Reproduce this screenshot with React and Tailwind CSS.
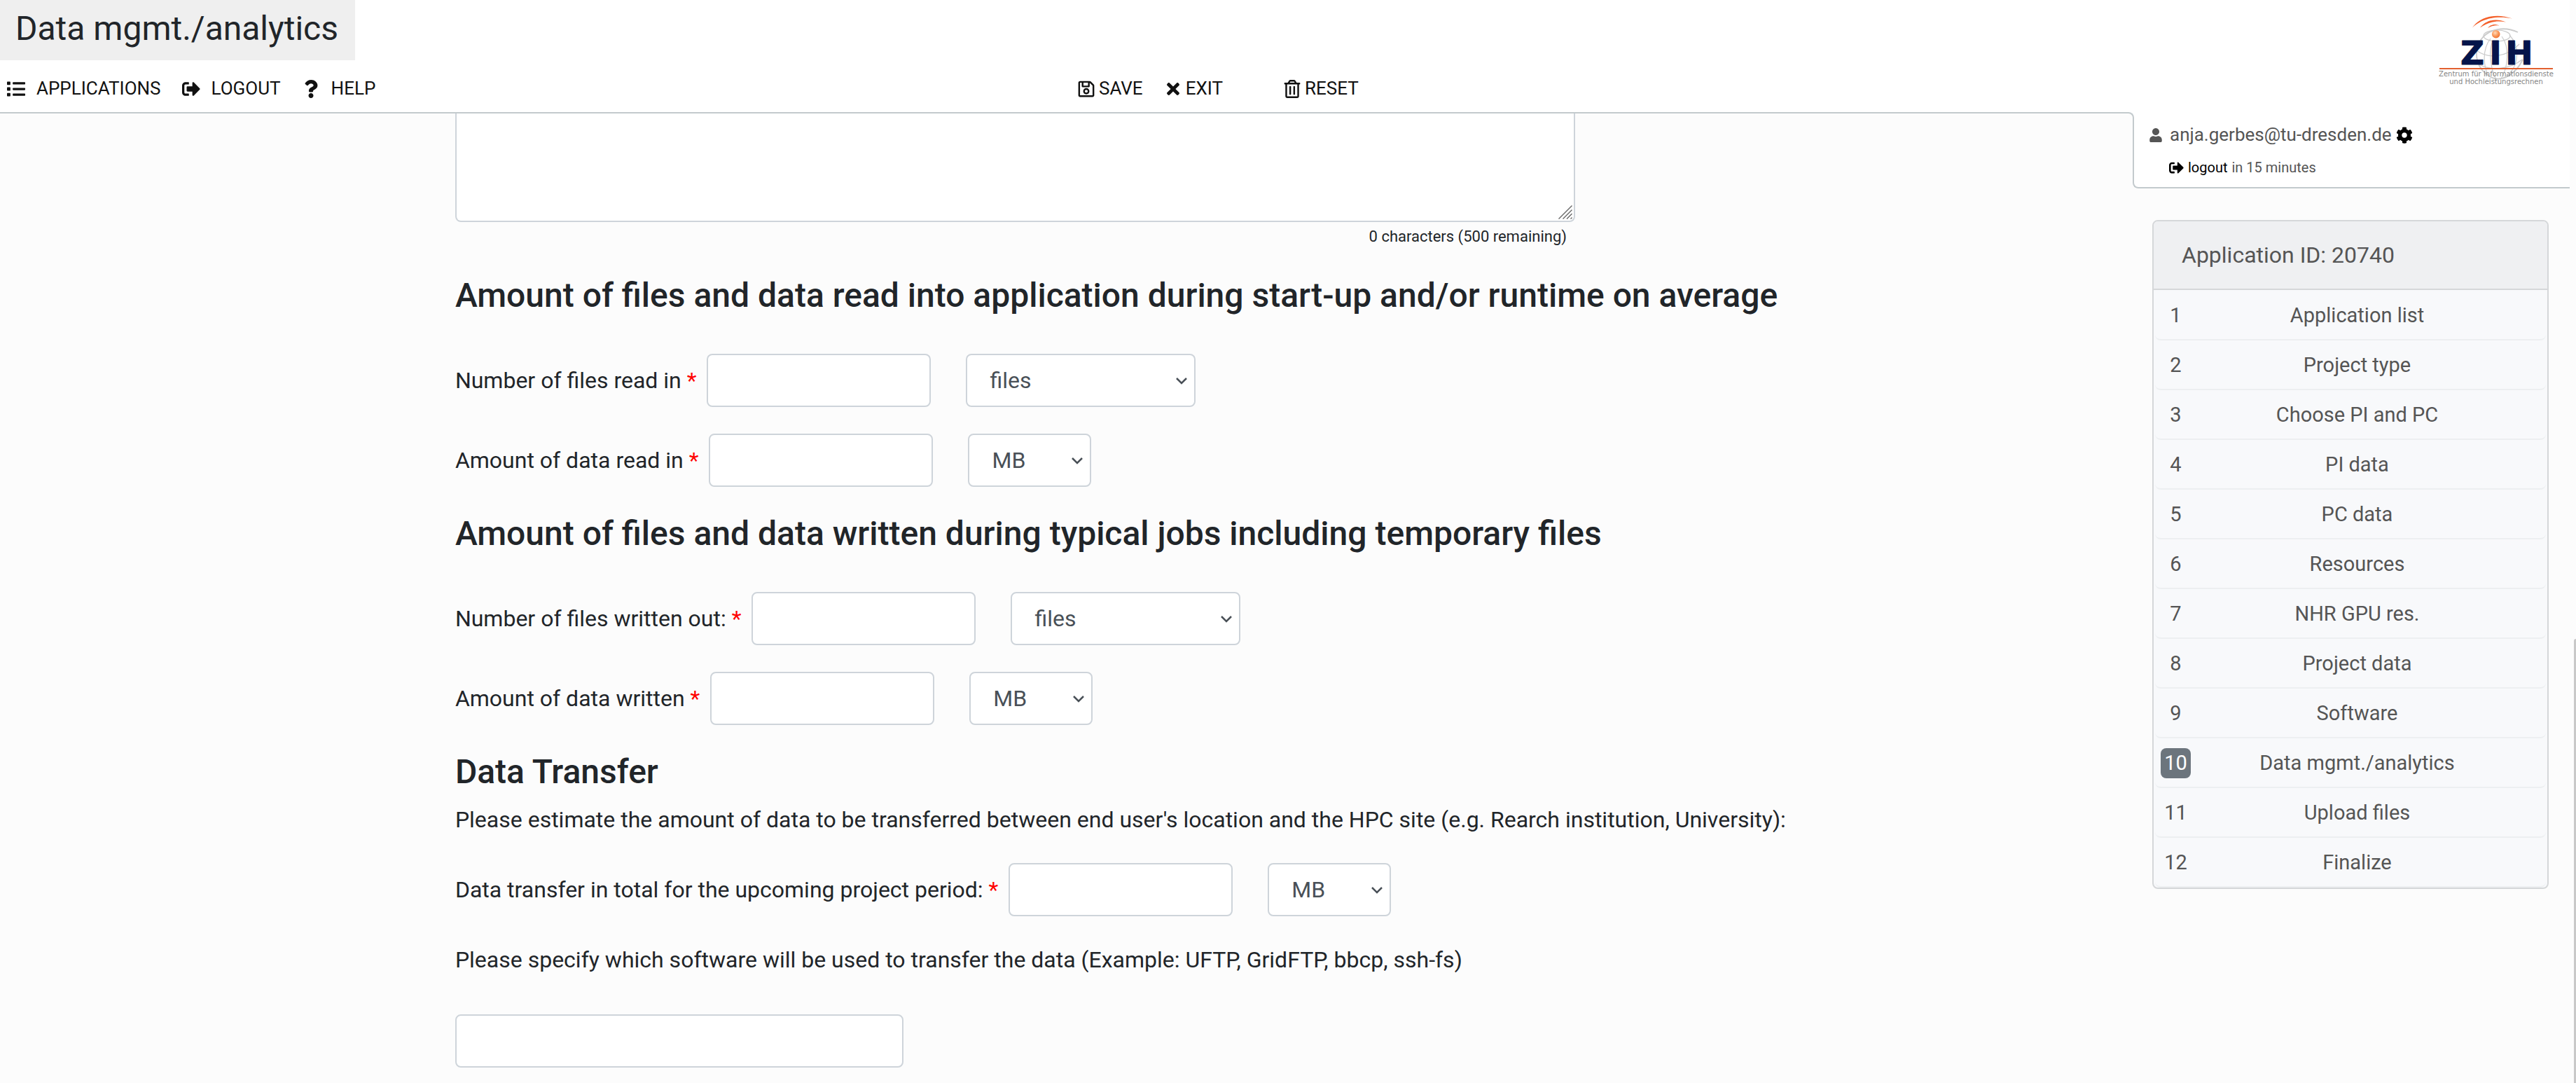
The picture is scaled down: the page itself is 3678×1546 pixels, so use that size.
import {
  FaList,
  FaSignOutAlt,
  FaQuestion,
  FaRegSave,
  FaTimes,
  FaRegTrashAlt,
  FaUser,
  FaCog,
} from "react-icons/fa";

const STEPS = [
  "Application list",
  "Project type",
  "Choose PI and PC",
  "PI data",
  "PC data",
  "Resources",
  "NHR GPU res.",
  "Project data",
  "Software",
  "Data mgmt./analytics",
  "Upload files",
  "Finalize",
];
const CURRENT_STEP = 10;

function Logo() {
  return (
    <svg
      viewBox="0 0 170 130"
      className="mr-[19px] h-[130px] w-[170px] shrink-0"
      role="img"
      aria-label="ZIH"
    >
      <defs>
        <radialGradient id="ball" cx="0.4" cy="0.35" r="0.7">
          <stop offset="0" stopColor="#ffd9b8" />
          <stop offset="0.5" stopColor="#fb9f63" />
          <stop offset="1" stopColor="#ee6a26" />
        </radialGradient>
      </defs>
      <g fill="none" stroke="#cbcbcb" strokeWidth="1.2">
        <path d="M115 46 C96 37 73 41 62 57 C51 75 55 98 76 110 C92 118 112 106 122 85" strokeWidth="1.8" />
        <ellipse cx="85" cy="51" rx="19" ry="8" />
        <path d="M76 55 C64 70 65 95 74 110" />
        <path d="M79 58 C73 74 76 98 84 114" />
        <path d="M92 52 C103 66 102 96 90 114" />
        <path d="M103 50 C118 66 116 90 104 104" />
        <path d="M56 72 C72 84 98 83 117 63" />
        <path d="M58 91 C76 102 104 99 121 85" />
      </g>
      <g fill="#f4602a">
        <path d="M50 39.5 C60 24 84 18 107 26.5 C84 22 64 26.5 50 39.5Z" />
        <path d="M61 39.5 C69 28.5 84 25.5 98 31.5 C84 29 72 31.5 61 39.5Z" />
        <path d="M72 40 C76 35 82 33.5 88.5 36.5 C82 35.8 77 37 72 40Z" />
      </g>
      <g
        fill="#04144a"
        stroke="#04144a"
        strokeWidth="1"
        strokeLinejoin="round"
        fontFamily="DejaVu Sans"
        fontWeight="700"
        fontSize="47"
        textAnchor="middle"
      >
        <text x="50" y="92">Z</text>
        <text x="83" y="92">I</text>
        <text x="117" y="92">H</text>
      </g>
      <circle cx="83.7" cy="48.7" r="5.8" fill="url(#ball)" />
      <rect x="3" y="97" width="162" height="2" fill="#e2602f" />
      <g fill="#858585" fontFamily="DejaVu Sans" fontSize="10" textAnchor="middle">
        <text x="84" y="109">Zentrum für Informationsdienste</text>
        <text x="84" y="120">und Hochleistungsrechnen</text>
      </g>
    </svg>
  );
}

function Header() {
  const link = "flex items-center gap-4";
  const action = "flex cursor-pointer items-center gap-[5px]";
  return (
    <header className="flex h-40 bg-white">
      <div className="flex-1">
        <h1 className="w-fit bg-[#efefef] pt-3 pr-6 pb-4 pl-[22px] text-[48px] leading-[58px]">
          Data mgmt./analytics
        </h1>
        <div className="mt-[21px] flex text-[26px] leading-[39px] text-[#111]">
          <nav className="flex w-5/12 gap-[30px] pl-2.5">
            <a href="#applications" className={link}>
              <FaList className="h-[26px] w-auto" /> APPLICATIONS
            </a>
            <a href="#logout" className={link}>
              <FaSignOutAlt className="h-[26px] w-auto" /> LOGOUT
            </a>
            <a href="#help" className={link}>
              <FaQuestion className="h-[26px] w-auto" /> HELP
            </a>
          </nav>
          <div className="flex gap-[30px] pl-[88px]">
            <button type="button" className={action}>
              <FaRegSave className="h-[26px] w-auto" /> SAVE
            </button>
            <button type="button" className={action}>
              <FaTimes className="h-[26px] w-auto" /> EXIT
            </button>
            <button type="button" className={"ml-14 " + action}>
              <FaRegTrashAlt className="h-[26px] w-auto" /> RESET
            </button>
          </div>
        </div>
      </div>
      <Logo />
    </header>
  );
}

const BOX = "h-[76px] rounded-lg border-2 border-[#ced4da] bg-white text-[#495057]";

function Unit({ id, label, wide }) {
  return (
    <div className={wide ? "relative w-[328px]" : "relative w-44"}>
      <select
        id={id}
        aria-label={label}
        className={"block w-full appearance-none pl-8 " + BOX}
      >
        {wide ? (
          <>
            <option>files</option>
            <option>thousand files</option>
          </>
        ) : (
          <>
            <option>MB</option>
            <option>GB</option>
            <option>TB</option>
          </>
        )}
      </select>
      <svg
        viewBox="0 0 16 10"
        className="pointer-events-none absolute top-[34px] right-3 h-2.5 w-4"
        fill="none"
        stroke="#495057"
        strokeWidth="2.5"
        aria-hidden="true"
      >
        <path d="M1 1 L8 8 L15 1" />
      </svg>
    </div>
  );
}

function Field({ id, label, wide, className }) {
  return (
    <div className={"flex items-center " + className}>
      <label htmlFor={id} className="mr-[15px]">
        {label} <span className="text-[#ff0000]">*</span>
      </label>
      <input id={id} type="text" className={"mr-[50px] w-80 px-6 " + BOX} />
      <Unit id={id + "-unit"} label={label + " unit"} wide={wide} />
    </div>
  );
}

function Heading({ children }) {
  return (
    <h2 className="mt-[38px] text-[48px] leading-[58px] font-medium">{children}</h2>
  );
}

function Form() {
  return (
    <form className="ml-[21.47%] text-[32px] leading-[48px]">
      <div className="w-[1599px] max-w-full">
        <div className="relative">
          <textarea
            aria-label="Description"
            maxLength={500}
            className="block h-[155px] w-full resize-none rounded-b-lg border-2 border-t-0 border-[#ced4da] bg-white px-6"
          />
          <svg
            viewBox="0 0 20 20"
            className="pointer-events-none absolute right-1 bottom-1 h-5 w-5"
            stroke="#666"
            strokeWidth="1.4"
            aria-hidden="true"
          >
            <path d="M0.5 19.5 L19.5 0.5 M6.5 19.5 L19.5 6.5 M12 19.5 L19.5 12 M17.5 19.5 L19.5 17.5" />
          </svg>
        </div>
        <p className="mt-1 pr-3 text-right text-[22px] leading-[34px]">
          0 characters (500 remaining)
        </p>
      </div>

      <Heading>
        Amount of files and data read into application during start-up and/or runtime on
        average
      </Heading>
      <Field id="files-in" label="Number of files read in" wide className="mt-[54px]" />
      <Field id="data-in" label="Amount of data read in" className="mt-[38px]" />

      <Heading>
        Amount of files and data written during typical jobs including temporary files
      </Heading>
      <Field id="files-out" label="Number of files written out:" wide className="mt-[54px]" />
      <Field id="data-out" label="Amount of data written" className="mt-[38px]" />

      <Heading>Data Transfer</Heading>
      <p className="mt-[15px]">
        Please estimate the amount of data to be transferred between end user's location and
        the HPC site (e.g. Rearch institution, University):
      </p>
      <Field
        id="transfer"
        label="Data transfer in total for the upcoming project period:"
        className="mt-[38px]"
      />
      <label htmlFor="software" className="mt-[38px] block">
        Please specify which software will be used to transfer the data (Example: UFTP,
        GridFTP, bbcp, ssh-fs)
      </label>
      <input id="software" type="text" className={"mt-[54px] block w-[640px] px-6 " + BOX} />
    </form>
  );
}

function UserBox() {
  return (
    <div>
      <div className="flex bg-white">
        <div className="w-5 rounded-tr-lg border-t-2 border-r-2 border-[#c3cacd] bg-[#fcfcfc]" />
        <div className="pt-[13px] pl-[21px]">
          <div className="flex items-center text-[26px] leading-[39px]">
            <FaUser className="mr-2.5 h-5 w-auto" />
            anja.gerbes@tu-dresden.de
            <button type="button" aria-label="Settings" className="ml-1.5 cursor-pointer text-black">
              <FaCog className="h-6 w-auto" />
            </button>
          </div>
          <div className="mt-3 flex items-center pl-[29px] text-[20px] leading-[30px]">
            <a href="#logout" className="mr-1.5 flex items-center gap-1.5 text-black">
              <FaSignOutAlt className="h-[21px] w-auto" /> logout
            </a>
            in 15 minutes
          </div>
        </div>
      </div>
      <div className="ml-[18px] h-[15px] rounded-bl-lg border-b-2 border-l-2 border-[#c3cacd] bg-white" />
    </div>
  );
}

function Steps() {
  return (
    <section className="mt-[45px] mr-[30px] ml-[46px] overflow-hidden rounded-lg border-2 border-[#d5d7d9] bg-[#f8f9fb]">
      <h2 className="border-b-2 border-[#d5d7d9] bg-[#eff0f2] py-6 pl-10 text-[32px] leading-[48px]">
        Application ID: 20740
      </h2>
      <ol className="mx-0.5 pt-px text-[29px] leading-[43px]">
        {STEPS.map((name, i) => (
          <li key={name}>
            <a
              href={"#step-" + (i + 1)}
              className="flex rounded-b-lg border-b-2 border-[#edeff1] pt-3.5 pr-8 pb-3 pl-2"
            >
              <span
                className={
                  i + 1 === CURRENT_STEP
                    ? "w-[43px] rounded-lg bg-[#6c757d] text-center text-white"
                    : "w-[43px] text-center"
                }
              >
                {i + 1}
              </span>
              <span className="flex-1 text-center">{name}</span>
            </a>
          </li>
        ))}
      </ol>
    </section>
  );
}

export default function App() {
  return (
    <div className="flex min-h-screen bg-[#fcfcfc] font-['Roboto',sans-serif] text-[#212529]">
      <div className="flex-1">
        <Header />
        <div className="flex">
          <main className="flex-1 border-t-2 border-[#c3cacd]">
            <Form />
          </main>
          <aside className="w-[642px] text-[#555]">
            <UserBox />
            <Steps />
          </aside>
        </div>
      </div>
      <div className="flex w-[9px] flex-col items-end justify-end">
        <div className="h-[41vh] w-[3px] rounded-tl-sm bg-[#c8c8c8]" />
      </div>
    </div>
  );
}
